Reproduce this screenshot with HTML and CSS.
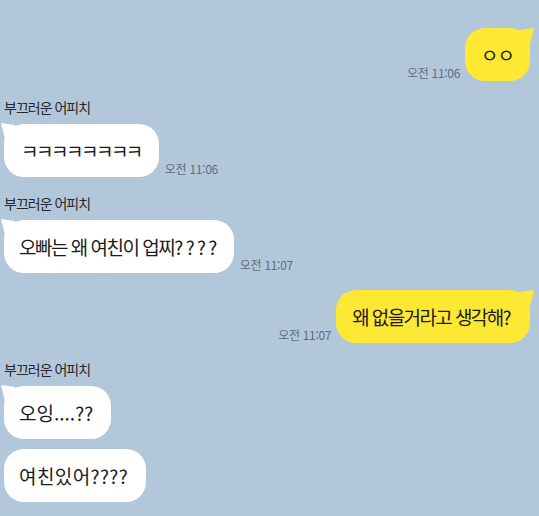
FILE: index.html
```html
<!DOCTYPE html>
<html lang="ko">
<head>
<meta charset="utf-8">
<link rel="stylesheet" href="styles.css">
</head>
<body>
<div class="chat">
  <div class="row right">
    <span class="time">오전 11:06</span>
    <div class="bubble mine tail narrow">ㅇㅇ</div>
  </div>

  <div class="group">
    <div class="name">부끄러운 어피치</div>
    <div class="row">
      <div class="bubble theirs tail kk">ㅋㅋㅋㅋㅋㅋㅋㅋ</div>
      <span class="time">오전 11:06</span>
    </div>
  </div>

  <div class="group">
    <div class="name">부끄러운 어피치</div>
    <div class="row">
      <div class="bubble theirs tail snug">오빠는 왜 여친이 업찌? ? ? ?</div>
      <span class="time">오전 11:07</span>
    </div>
  </div>

  <div class="row right">
    <span class="time">오전 11:07</span>
    <div class="bubble mine tail tight">왜 없을거라고 생각해?</div>
  </div>

  <div class="group">
    <div class="name">부끄러운 어피치</div>
    <div class="stack">
      <div class="row">
        <div class="bubble theirs tail">오잉....??</div>
      </div>
      <div class="row">
        <div class="bubble theirs roomy">여친있어????</div>
      </div>
    </div>
  </div>
</div>
</body>
</html>
```

FILE: styles.css
```css
html, body {
  margin: 0;
  padding: 0;
}

body {
  background: #b2c7da;
  font-family: "Noto Sans CJK KR", "Noto Sans", sans-serif;
  color: #1b1b1b;
  width: 539px;
  height: 516px;
  overflow: hidden;
}

.chat {
  display: flex;
  flex-direction: column;
  gap: 17px;
  padding: 28px 9px 0 4px;
}

.group {
  display: flex;
  flex-direction: column;
}

.name {
  font-size: 14px;
  line-height: 18px;
  letter-spacing: -1px;
  color: #262626;
  margin-bottom: 8px;
}

.stack {
  display: flex;
  flex-direction: column;
  gap: 10px;
}

.row {
  display: flex;
  align-items: flex-end;
  gap: 6px;
}

.row.right {
  justify-content: flex-end;
  gap: 5px;
}

.bubble {
  position: relative;
  box-sizing: border-box;
  height: 53px;
  display: flex;
  align-items: center;
  padding: 0 18px 0 15px;
  border-radius: 20px;
  font-size: 19px;
  white-space: nowrap;
}

.theirs {
  background: #ffffff;
}

.mine {
  background: #fde834;
}

.tail::before {
  content: "";
  position: absolute;
  top: -1px;
  width: 14px;
  height: 16px;
  background: inherit;
}

.theirs.tail::before {
  left: -3px;
  clip-path: polygon(0 0, 14px 2px, 14px 16px, 4px 16px);
}

.mine.tail::before {
  right: -4px;
  top: 0;
  clip-path: polygon(14px 0, 0 2px, 0 16px, 10px 16px);
}

.kk {
  letter-spacing: -2.5px;
  padding-left: 17px;
}

.snug {
  letter-spacing: -1.5px;
}

.tight {
  letter-spacing: -1.6px;
  padding: 0 20px 0 16px;
}

.narrow {
  letter-spacing: -1px;
  padding: 0 16px 0 16px;
}

.roomy {
  letter-spacing: 0.4px;
}

.time {
  font-size: 12px;
  line-height: 14px;
  letter-spacing: -0.3px;
  color: #5d6c7b;
  white-space: nowrap;
  margin-bottom: 1px;
}
```
